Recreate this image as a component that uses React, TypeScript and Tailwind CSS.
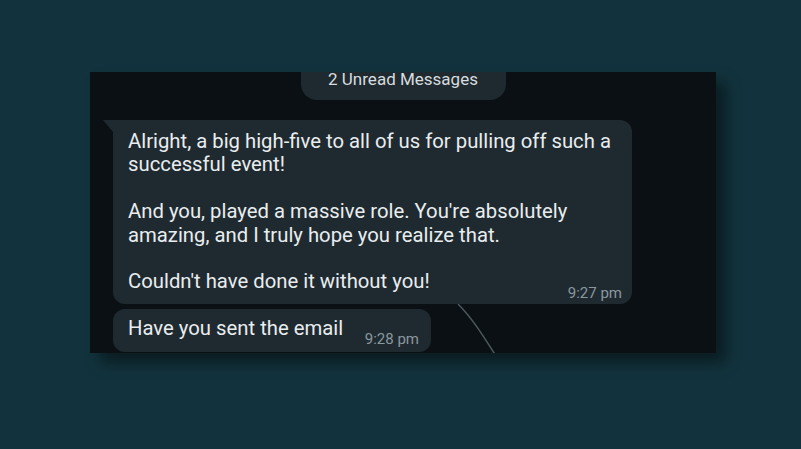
export default function App() {
  return (
    <div className="w-[801px] h-[449px] bg-[#12333d] pt-[72px] pl-[90px] font-['Roboto',sans-serif]">
      <div className="relative w-[626px] h-[281px] bg-[#0b1014] shadow-[10px_10px_14px_rgba(0,0,0,0.45)] overflow-hidden">
        {/* wallpaper stroke */}
        <svg className="absolute left-[360px] top-[228px]" width="60" height="60" viewBox="0 0 60 60">
          <path d="M8 4 C 22 18, 32 34, 46 56" stroke="#5d6a70" strokeWidth="1.5" fill="none" opacity="0.8" />
        </svg>

        {/* Unread pill */}
        <div className="mx-auto w-[205px] h-[28px] rounded-b-[16px] bg-[#1f2a30] flex justify-center">
          <span className="text-[17px] leading-[14px] text-[#d6dcdf]">2 Unread Messages</span>
        </div>

        {/* Message 1 */}
        <div className="relative mt-[20px] ml-[23px] w-[519px] rounded-[12px] rounded-tl-none bg-[#1f2a30] pl-[15px] pr-[10px] pt-[10px] pb-[3px]">
          <div className="absolute -left-[10px] top-0 w-0 h-0 border-t-[12px] border-t-[#1f2a30] border-l-[10px] border-l-transparent" />
          <div className="text-[20.3px] leading-[23.4px] text-[#e9edef]">
            <p>Alright, a big high-five to all of us for pulling off such a successful event!</p>
            <p className="mt-[23.4px]">And you, played a massive role. You're absolutely amazing, and I truly hope you realize that.</p>
            <p className="mt-[23.4px]">Couldn't have done it without you!</p>
          </div>
          <div className="-mt-[9px] flex justify-end">
            <span className="text-[15px] leading-[16px] text-[#8a979e] whitespace-nowrap">9:27 pm</span>
          </div>
        </div>

        {/* Message 2 */}
        <div className="mt-[5px] ml-[23px] w-[318px] h-[43px] rounded-[12px] bg-[#1f2a30] pl-[15px] pr-[12px] pt-[8px] flex items-start">
          <span className="flex-1 text-[20.3px] leading-[23px] text-[#e9edef]">Have you sent the email</span>
          <span className="mt-[14px] text-[15px] leading-[16px] text-[#8a979e] whitespace-nowrap">9:28 pm</span>
        </div>
      </div>
    </div>
  );
}
